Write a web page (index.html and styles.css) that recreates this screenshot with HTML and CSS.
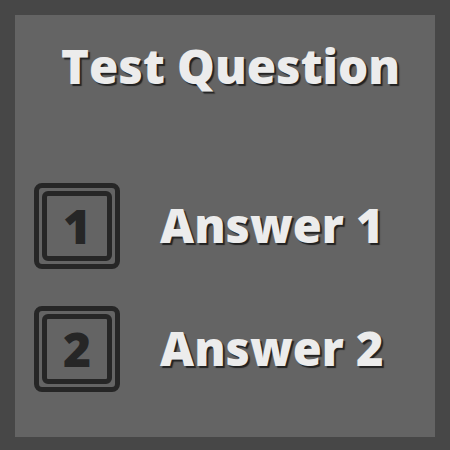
FILE: index.html
```html
<!DOCTYPE html>
<html>
<head>
<meta charset="utf-8">
<link rel="stylesheet" href="styles.css">
</head>
<body>
<div class="panel">
  <h1 class="title">Test Question</h1>
  <div class="answers">
    <div class="answer">
      <div class="key"><div class="key-inner">1</div></div>
      <div class="label">Answer 1</div>
    </div>
    <div class="answer">
      <div class="key"><div class="key-inner">2</div></div>
      <div class="label">Answer 2</div>
    </div>
  </div>
</div>
</body>
</html>
```
FILE: styles.css
```css
html, body {
  margin: 0;
  padding: 0;
  background: #474747;
  width: 450px;
  height: 450px;
  overflow: hidden;
}
body {
  padding: 15px;
  box-sizing: border-box;
  font-family: "Open Sans", sans-serif;
}
.panel {
  background: #646464;
  width: 420px;
  height: 422px;
  box-sizing: border-box;
  padding-top: 27px;
}
.title {
  margin: 0;
  text-align: center;
  font-size: 47.5px;
  font-weight: 800;
  line-height: 1;
  color: #ececec;
  text-shadow: 2px 2px 1px #222222;
  padding-left: 11px;
}
.answers {
  display: flex;
  flex-direction: column;
  gap: 37px;
  margin-top: 93px;
  padding-left: 19px;
}
.answer {
  display: flex;
  align-items: center;
  gap: 40px;
}
.key {
  width: 86px;
  height: 86px;
  box-sizing: border-box;
  border: 5px solid #262626;
  border-radius: 8px;
  padding: 3px;
}
.key-inner {
  width: 100%;
  height: 100%;
  box-sizing: border-box;
  border: 5px solid #262626;
  border-radius: 6px;
  display: flex;
  align-items: center;
  justify-content: center;
  font-size: 48px;
  font-weight: 800;
  color: #262626;
  line-height: 1;
}
.label {
  font-size: 47px;
  font-weight: 800;
  color: #ececec;
  text-shadow: 2px 2px 1px #222222;
  line-height: 1;
}
```
